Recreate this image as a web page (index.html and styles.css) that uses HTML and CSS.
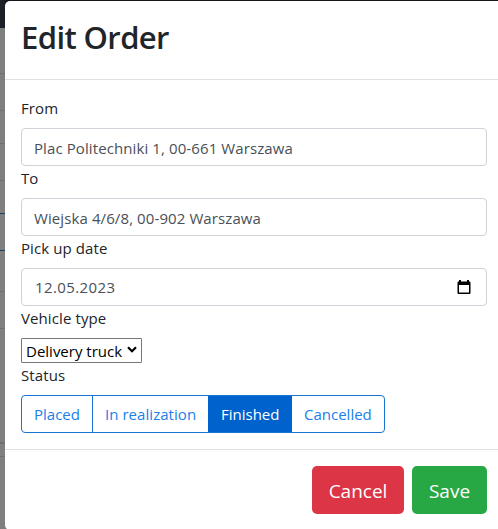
FILE: index.html
```html
<!DOCTYPE html>
<html lang="en">
<head>
<meta charset="utf-8">
<title>Edit Order</title>
<link rel="stylesheet" href="styles.css">
</head>
<body>
<div class="backdrop">
  <div class="page-edge">
    <div class="edge navbar"></div>
    <div class="edge row-45"></div>
    <div class="edge row-37"></div>
    <div class="edge row-33"></div>
    <div class="edge row-37"></div>
    <div class="edge row-33 blue"></div>
    <div class="edge row-37 blue"></div>
    <div class="edge row-41"></div>
    <div class="edge row-37"></div>
    <div class="edge row-114"></div>
    <div class="edge row-14"></div>
  </div>
  <main class="modal">
    <header class="modal-header"><h2>Edit Order</h2></header>
    <section class="modal-body">
      <div class="label">From</div>
      <div class="control">Plac Politechniki 1, 00-661 Warszawa</div>
      <div class="label">To</div>
      <div class="control">Wiejska 4/6/8, 00-902 Warszawa</div>
      <div class="label">Pick up date</div>
      <div class="control date">12.05.2023
        <svg class="calendar" width="14" height="15" viewBox="0 0 14 15"><path fill="#000" fill-rule="evenodd" d="M2 0h2v1.5h6V0h2v1.5h.5q1 0 1 1V13q0 1-1 1h-11q-1 0-1-1V2.500q0-1 1-1H2zM2 5v7.500h10V5z"/></svg>
      </div>
      <div class="label">Vehicle type</div>
      <div class="select">Delivery truck
        <svg class="chevron" width="10" height="7" viewBox="0 0 10 7"><path fill="none" stroke="#000" stroke-width="2.200" d="M1 1.200 5 5.200 9 1.200"/></svg>
      </div>
      <div class="label">Status</div>
      <div class="group">
        <div class="option placed">Placed</div>
        <div class="option realization">In realization</div>
        <div class="option finished">Finished</div>
        <div class="option cancelled">Cancelled</div>
      </div>
    </section>
    <footer class="modal-footer">
      <div class="btn danger">Cancel</div>
      <div class="btn success">Save</div>
    </footer>
  </main>
</div>
</body>
</html>
```
FILE: styles.css
```css
* { box-sizing: border-box; }
body {
  margin: 0;
  height: 529px;
  overflow: hidden;
  font: 15px/24px "Open Sans", "Noto Sans", sans-serif;
  color: #212529;
}
.backdrop { display: flex; height: 529px; background: linear-gradient(#121519 28px, #7f7f7f 28px); }
.page-edge { width: 5px; flex: none; }
.edge { border-bottom: 1px solid #6f7071; }
.navbar { height: 28px; border: 0; background: #1a2026; }
.row-45 { height: 46px; }
.row-37 { height: 37px; }
.row-33 { height: 33px; }
.row-41 { height: 41px; }
.row-114 { height: 115px; border-bottom-width: 2px; }
.row-14 { height: 13px; }
.blue { border-color: #17406b; }
.modal { flex: 1; height: 529px; margin-top: 1px; background: #fff; border-radius: 5px 0 0 5px; }
.modal-header { height: 79px; padding: 15px 16px 0; border-bottom: 1px solid #dee2e6; }
h2 { margin: 0; font-size: 31px; line-height: 42px; font-weight: 600; letter-spacing: -0.6px; }
.modal-body { padding: 16px 11px 16px 16px; }
.label { height: 24px; margin-bottom: 8px; letter-spacing: 0.1px; white-space: nowrap; }
.control {
  display: flex;
  align-items: center;
  height: 38px;
  padding: 1px 12px 0;
  border: 1px solid #ced4da;
  border-radius: 4px;
  color: #495057;
  letter-spacing: 0.1px;
  white-space: nowrap;
}
.date { justify-content: space-between; padding: 0 15px 0 13px; letter-spacing: 0.4px; }
.select {
  display: flex;
  align-items: center;
  justify-content: space-between;
  width: 121px;
  height: 25px;
  padding: 1px 4px;
  border: 1px solid #767676;
  border-radius: 1px;
  color: #000;
  white-space: nowrap;
}
.chevron { position: relative; top: -1px; }
.group {
  display: flex;
  width: 364px;
  height: 38px;
  border: 1px solid #1a73cf;
  border-radius: 4px;
  overflow: hidden;
}
.option { display: flex; align-items: center; padding: 0 0 0 12px; color: #2080e8; white-space: nowrap; }
.placed { width: 70px; }
.realization { width: 116px; border-left: 1px solid #1a73cf; letter-spacing: 0.05px; }
.finished { width: 84px; padding-left: 13px; background: #0062cc; color: #fff; }
.cancelled { flex: 1; }
.modal-footer {
  display: flex;
  justify-content: flex-end;
  gap: 8px;
  padding: 16px 11px 16px 0;
  border-top: 1px solid #dee2e6;
}
.btn {
  display: flex;
  align-items: center;
  justify-content: center;
  height: 48px;
  padding-top: 2px;
  border-radius: 5px;
  color: #fff;
  font-size: 19px;
}
.danger { width: 92px; background: #dc3545; }
.success { width: 75px; background: #28a745; }
```
